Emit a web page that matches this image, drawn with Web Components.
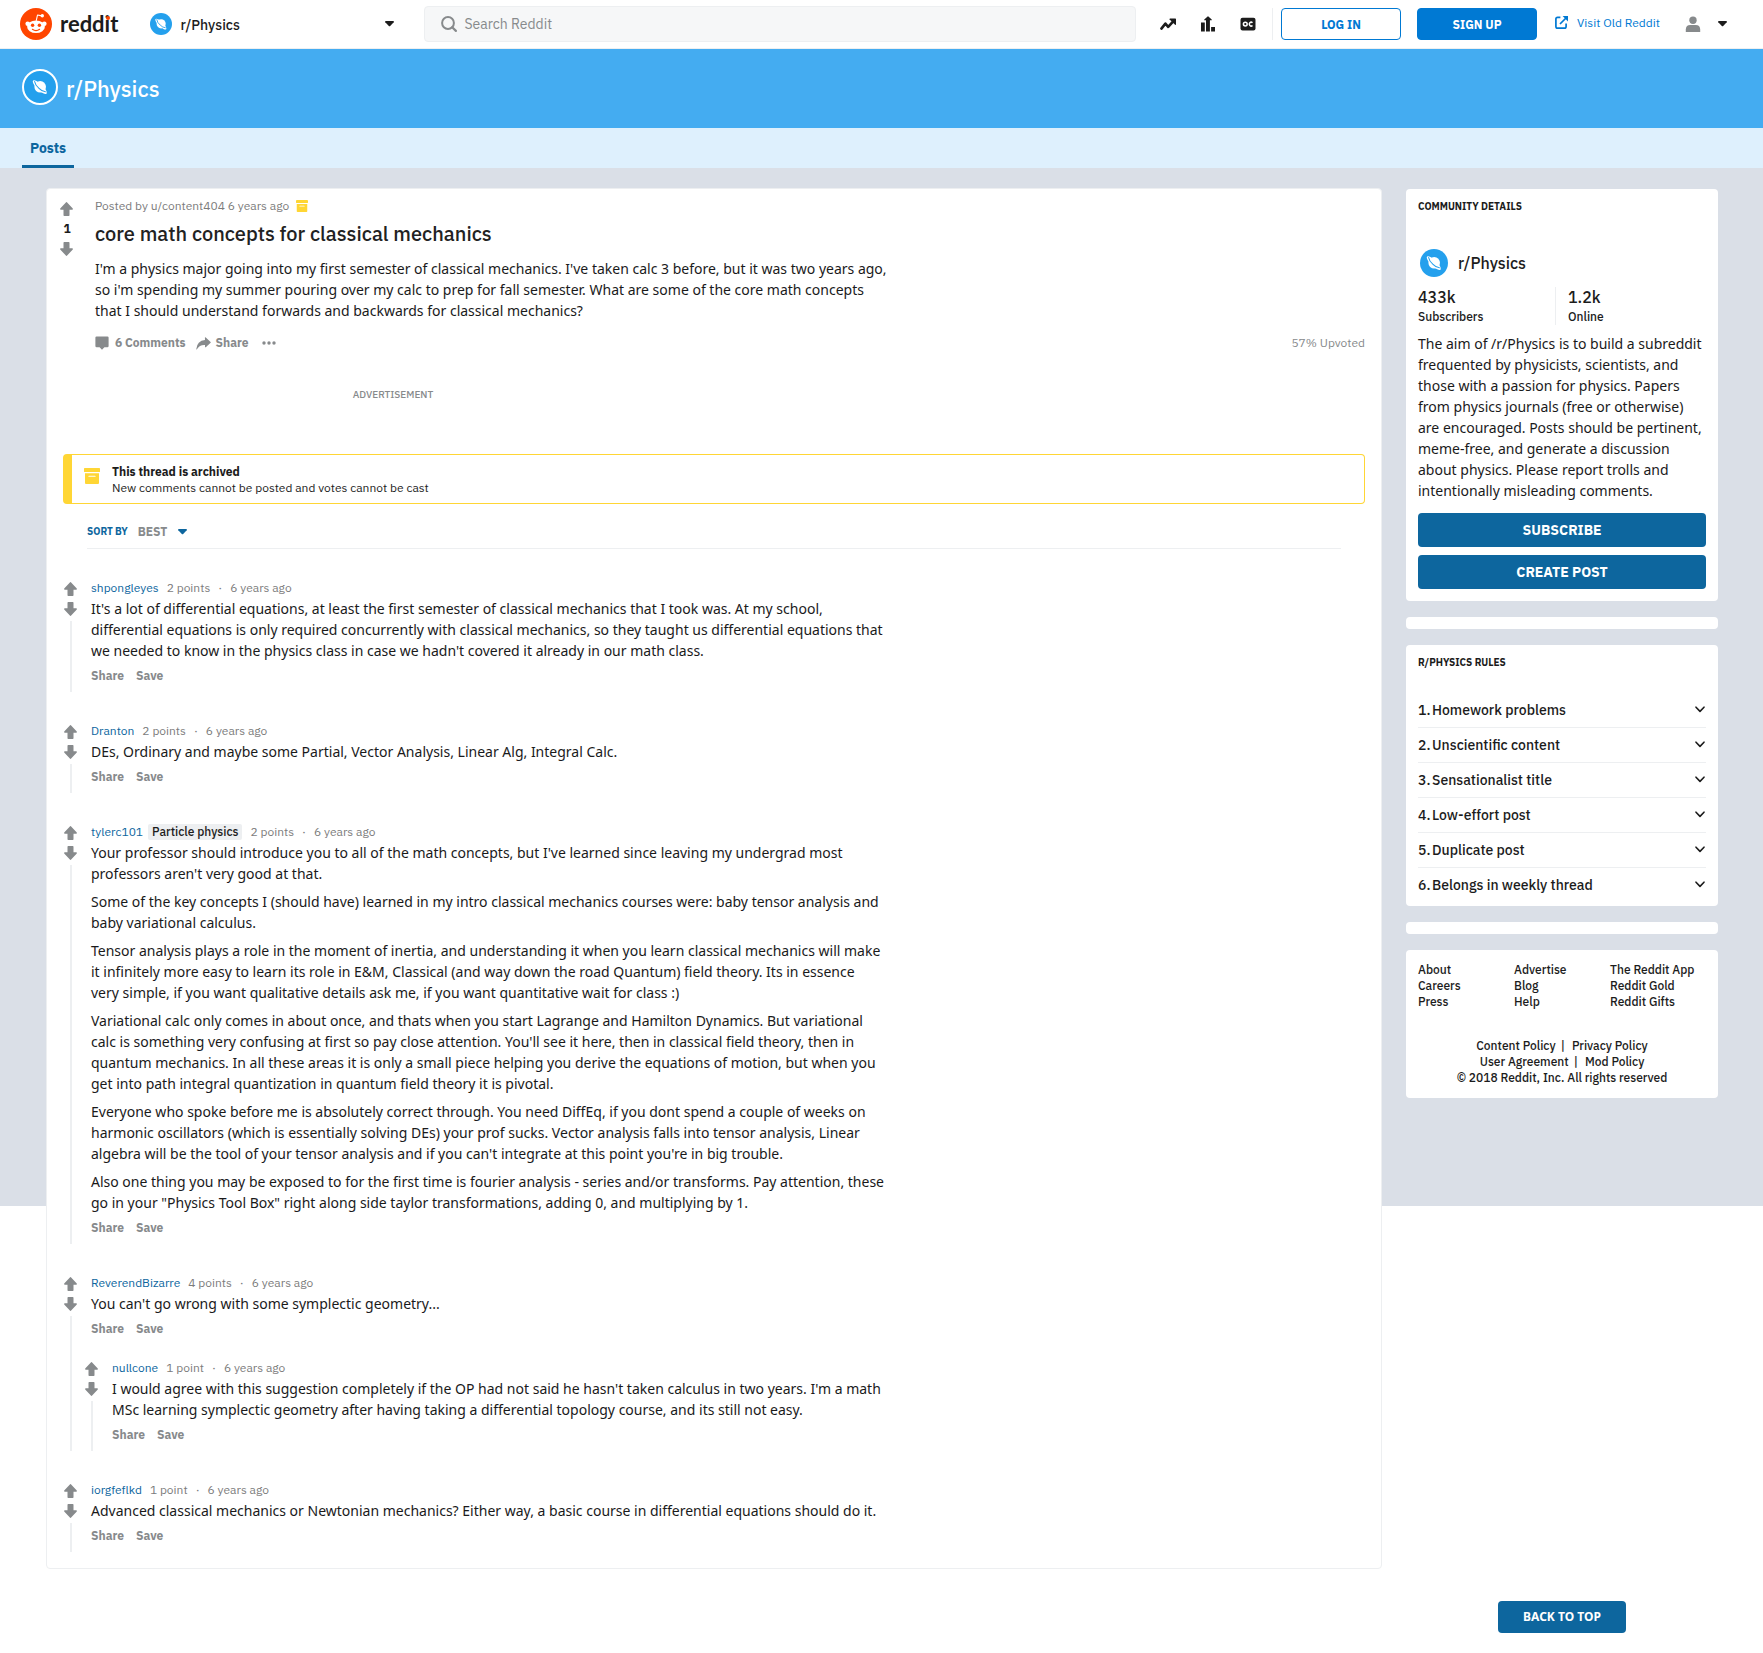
<!DOCTYPE html>
<html lang="en">
<head>
<meta charset="utf-8">
<meta name="viewport" content="width=device-width, initial-scale=1">
<title>core math concepts for classical mechanics : Physics</title>
<style>
  :root {
    --brand: #0079d3;
    --accent: #0d669e;
    --accent-soft: #def0fd;
    --banner: #44acf1;
    --planet: #24a0ed;
    --canvas: #dadfe7;
    --ink: #1c1c1c;
    --muted: #878a8c;
    --meta: #7c7c7c;
    --line: #edeff1;
    --archive: #ffd635;
    --body-font: "Noto Sans", "Open Sans", sans-serif;
  }
  body {
    margin: 0;
    background: #fff;
    color: var(--ink);
    font: 400 12px/16px "IBM Plex Sans", Roboto, "Open Sans", sans-serif;
  }
</style>
</head>
<body>
<reddit-page>
  <reddit-header slot="top"></reddit-header>
  <community-banner slot="top" name="r/Physics"></community-banner>

  <article-card>
    <forum-post author="u/content404" age="6 years ago" score="1" heading="core math concepts for classical mechanics" comments="6" upvoted="57%">
      <p>I'm a physics major going into my first semester of classical mechanics. I've taken calc 3 before, but it was two years ago, so i'm spending my summer pouring over my calc to prep for fall semester. What are some of the core math concepts that I should understand forwards and backwards for classical mechanics?</p>
    </forum-post>
    <ad-slot>ADVERTISEMENT</ad-slot>
    <archive-notice heading="This thread is archived">New comments cannot be posted and votes cannot be cast</archive-notice>
    <sort-bar></sort-bar>

    <thread-comment author="shpongleyes" points="2 points" age="6 years ago">
      <p>It's a lot of differential equations, at least the first semester of classical mechanics that I took was. At my school, differential equations is only required concurrently with classical mechanics, so they taught us differential equations that we needed to know in the physics class in case we hadn't covered it already in our math class.</p>
    </thread-comment>
    <thread-comment author="Dranton" points="2 points" age="6 years ago">
      <p>DEs, Ordinary and maybe some Partial, Vector Analysis, Linear Alg, Integral Calc.</p>
    </thread-comment>
    <thread-comment author="tylerc101" flair="Particle physics" points="2 points" age="6 years ago">
      <p>Your professor should introduce you to all of the math concepts, but I've learned since leaving my undergrad most professors aren't very good at that.</p>
      <p>Some of the key concepts I (should have) learned in my intro classical mechanics courses were: baby tensor analysis and baby variational calculus.</p>
      <p>Tensor analysis plays a role in the moment of inertia, and understanding it when you learn classical mechanics will make it infinitely more easy to learn its role in E&amp;M, Classical (and way down the road Quantum) field theory. Its in essence very simple, if you want qualitative details ask me, if you want quantitative wait for class :)</p>
      <p>Variational calc only comes in about once, and thats when you start Lagrange and Hamilton Dynamics. But variational calc is something very confusing at first so pay close attention. You'll see it here, then in classical field theory, then in quantum mechanics. In all these areas it is only a small piece helping you derive the equations of motion, but when you get into path integral quantization in quantum field theory it is pivotal.</p>
      <p>Everyone who spoke before me is absolutely correct through. You need DiffEq, if you dont spend a couple of weeks on harmonic oscillators (which is essentially solving DEs) your prof sucks. Vector analysis falls into tensor analysis, Linear algebra will be the tool of your tensor analysis and if you can't integrate at this point you're in big trouble.</p>
      <p>Also one thing you may be exposed to for the first time is fourier analysis - series and/or transforms. Pay attention, these go in your "Physics Tool Box" right along side taylor transformations, adding 0, and multiplying by 1.</p>
    </thread-comment>
    <thread-comment author="ReverendBizarre" points="4 points" age="6 years ago">
      <p>You can't go wrong with some symplectic geometry...</p>
      <thread-comment slot="replies" author="nullcone" points="1 point" age="6 years ago">
        <p>I would agree with this suggestion completely if the OP had not said he hasn't taken calculus in two years. I'm a math MSc learning symplectic geometry after having taking a differential topology course, and its still not easy.</p>
      </thread-comment>
    </thread-comment>
    <thread-comment author="iorgfeflkd" points="1 point" age="6 years ago">
      <p>Advanced classical mechanics or Newtonian mechanics? Either way, a basic course in differential equations should do it.</p>
    </thread-comment>
  </article-card>

  <side-card slot="side" heading="COMMUNITY DETAILS">
    <community-details name="r/Physics" subscribers="433k" online="1.2k">The aim of /r/Physics is to build a subreddit frequented by physicists, scientists, and those with a passion for physics. Papers from physics journals (free or otherwise) are encouraged. Posts should be pertinent, meme-free, and generate a discussion about physics. Please report trolls and intentionally misleading comments.</community-details>
  </side-card>
  <side-card slot="side" empty></side-card>
  <side-card slot="side" heading="R/PHYSICS RULES" tight>
    <rule-item number="1.">Homework problems</rule-item>
    <rule-item number="2.">Unscientific content</rule-item>
    <rule-item number="3.">Sensationalist title</rule-item>
    <rule-item number="4.">Low-effort post</rule-item>
    <rule-item number="5.">Duplicate post</rule-item>
    <rule-item number="6.">Belongs in weekly thread</rule-item>
  </side-card>
  <side-card slot="side" empty></side-card>
  <side-card slot="side"><site-links></site-links></side-card>
</reddit-page>

<script>
const RESET = `
  *, *::before, *::after { box-sizing: border-box; }
  button, input, select { font: inherit; color: inherit; margin: 0; padding: 0; border: 0; background: none; border-radius: 0; }
  button, select { cursor: pointer; }
  a { color: inherit; text-decoration: none; }
  h1, h2, p { margin: 0; }
`;

function define(tag, render) {
  customElements.define(tag, class extends HTMLElement {
    constructor() {
      super();
      this.attachShadow({ mode: "open" });
    }
    connectedCallback() {
      const template = document.createElement("template");
      template.innerHTML = render(name => this.getAttribute(name) || "", this);
      this.shadowRoot.replaceChildren(template.content.cloneNode(true));
    }
  });
}

/* Each icon: width, height, viewBox, markup */
const ICONS = {
  up: [13, 14, "0 0 13 14", `<path fill="currentColor" d="M6.1.2Q6.5-.1 6.9.2L12.8 6.6Q13.3 7.8 12 7.8H9.5V13.3Q9.5 14 8.8 14H4.2Q3.5 14 3.5 13.3V7.8H1Q-.3 7.8.2 6.6Z"/>`],
  down: [13, 14, "0 0 13 14", `<path fill="currentColor" d="M6.1 13.8Q6.5 14.1 6.9 13.8L12.8 7.4Q13.3 6.2 12 6.2H9.5V.7Q9.5 0 8.8 0H4.2Q3.5 0 3.5.7V6.2H1Q-.3 6.2.2 7.4Z"/>`],
  caret: [9, 6, "0 0 9 6", `<path fill="currentColor" d="M.7 0H8.3Q9.4.2 8.7 1.2L5.2 5Q4.5 5.6 3.8 5L.3 1.2Q-.4.2.7 0Z"/>`],
  chevron: [10, 7, "0 0 10 7", `<path fill="none" stroke="currentColor" stroke-width="1.6" stroke-linecap="round" stroke-linejoin="round" d="M1 1.2L5 5.4L9 1.2"/>`],
  search: [16, 16, "0 0 16 16", `<circle cx="7" cy="7" r="5.9" fill="none" stroke="currentColor" stroke-width="2"/><path d="M11.2 11.2L14.9 14.9" stroke="currentColor" stroke-width="2.2" stroke-linecap="round"/>`],
  trending: [16, 12, "0 0 16 12", `<path fill="none" stroke="currentColor" stroke-width="2.6" stroke-linejoin="round" stroke-linecap="round" d="M1.4 10.6L5.4 5.6L8.2 8.8L13 3.6"/><path fill="currentColor" d="M10 .4H15.3Q16 .4 16 1.1V6.6Q15.7 7.2 15.1 6.7L9.6 1.5Q9.2.7 10 .4Z"/>`],
  bars: [16, 16, "0 0 16 16", `<path fill="currentColor" d="M1 6.5H4.8V15.5H1ZM6 15.5V4.2H4.3Q4 3.8 4.3 3.4L7.6.4Q8 .1 8.4.4L11.7 3.4Q12 3.8 11.7 4.2H9.9V15.5ZM11.1 11H15V15.5H11.1Z"/>`],
  oc: [16, 14, "0 0 16 14", `<rect x=".5" y=".8" width="15" height="12.6" rx="2" fill="currentColor"/><circle cx="5.3" cy="7.1" r="1.9" fill="none" stroke="#fff" stroke-width="1.5"/><path d="M12.5 5.7A1.9 1.9 0 1 0 12.5 8.5" fill="none" stroke="#fff" stroke-width="1.5"/>`],
  external: [13, 13, "0 0 13 13", `<path fill="none" stroke="currentColor" stroke-width="1.7" d="M5.4 1.4H2.6Q.9 1.4.9 3.1V10.4Q.9 12.1 2.6 12.1H9.4Q11.1 12.1 11.1 10.4V7.6M5 8L11 2"/><path fill="currentColor" d="M7.6 0H13V5.4Z"/>`],
  user: [16, 16, "0 0 16 16", `<circle cx="8" cy="4.3" r="3.7" fill="currentColor"/><path fill="currentColor" d="M.8 16V13.4Q1 9 5.2 9H10.8Q15 9 15.2 13.4V16Z"/>`],
  comment: [14, 14, "0 0 14 14", `<path fill="currentColor" d="M1.6.4H12.4Q13.6.4 13.6 1.6V10Q13.6 11.2 12.4 11.2H9.4L7 13.8L4.6 11.2H1.6Q.4 11.2.4 10V1.6Q.4.4 1.6.4Z"/>`],
  share: [15, 13, "0 0 15 13", `<path fill="currentColor" d="M8.9.5Q9.4.1 9.8.5L14.6 5Q15 5.4 14.6 5.8L9.8 10.2Q9.3 10.5 9 10.1V8Q3.600 7.600.9 12.3Q.3 12.900.3 12Q1 3.700 9 2.900Z"/>`],
  dots: [14, 4, "0 0 14 4", `<g fill="currentColor"><circle cx="2" cy="2" r="1.7"/><circle cx="7" cy="2" r="1.7"/><circle cx="12" cy="2" r="1.7"/></g>`],
  box: [12, 12, "0 0 16 16", `<path fill="currentColor" d="M.6 0H15.400Q16 0 16 .6V3.400Q16 4 15.400 4H.6Q0 4 0 3.400V.6Q0 0 .6 0Z"/><path fill="currentColor" fill-rule="evenodd" d="M1 5.300H15V15Q15 16 14 16H2Q1 16 1 15ZM5 7.700Q4.400 7.700 4.400 8.300V8.700H11.600V8.300Q11.600 7.700 11 7.700Z"/>`],
  planet: [28, 28, "0 0 28 28", `<circle cx="14" cy="14" r="14" fill="#24a0ed"/><circle cx="14.200" cy="13.800" r="5.800" fill="#fff"/><ellipse cx="13.800" cy="14.100" rx="9.400" ry="3" transform="rotate(44 13.800 14.100)" fill="#fff"/><path d="M8.600 8.500Q9.300 12.500 13 15.400Q16.200 18.600 19.400 18.800" fill="none" stroke="#24a0ed" stroke-width="1.100" stroke-linecap="round"/>`],
  snoo: [32, 32, "0 0 32 32", `<circle cx="16" cy="16" r="16" fill="#ff4500"/><g fill="#fff"><circle cx="7.700" cy="15.700" r="2.300"/><circle cx="24.300" cy="15.700" r="2.300"/><ellipse cx="16" cy="18.700" rx="8.900" ry="6.300"/><circle cx="22.300" cy="7.800" r="1.700"/></g><path d="M16.200 12.800L17.500 7L22 7.900" fill="none" stroke="#fff" stroke-width="1.100" stroke-linejoin="round"/><circle cx="12.600" cy="17.200" r="1.700" fill="#ff4500"/><circle cx="19.400" cy="17.200" r="1.700" fill="#ff4500"/><path d="M12.400 21.300Q16 23.900 19.600 21.300" fill="none" stroke="#ff4500" stroke-width="1.100" stroke-linecap="round"/>`]
};

define("ui-icon", (attr) => {
  const [w, h, box, body] = ICONS[attr("name")];
  const size = Number(attr("size"));
  const width = size || w;
  const height = size ? Math.round(size * h / w) : h;
  return `<style>:host { display: inline-flex; flex: none; } svg { display: block; overflow: visible; }</style>
    <svg width="${width}" height="${height}" viewBox="${box}" aria-hidden="true">${body}</svg>`;
});

define("reddit-page", () => `
  <style>${RESET}
    :host { display: block; }
    main {
      display: flex; align-items: stretch; gap: 24px;
      padding: 20px 45px 20px 46px;
      background: linear-gradient(var(--canvas), var(--canvas)) no-repeat 0 0 / 100% 1038px;
    }
    .content { flex: 1; min-width: 0; padding-bottom: 64px; }
    aside { flex: 0 0 312px; display: flex; flex-direction: column; gap: 16px; padding-top: 1px; }
    .top { margin: auto auto 0; width: 128px; height: 32px; border-radius: 4px; background: var(--accent); color: #fff; font: 700 12px/16px var(--body-font); }
  </style>
  <slot name="top"></slot>
  <main>
    <div class="content"><slot></slot></div>
    <aside><slot name="side"></slot><button class="top" type="button">BACK TO TOP</button></aside>
  </main>`);

define("reddit-header", () => `
  <style>${RESET}
    :host { display: block; }
    header { display: flex; align-items: center; height: 49px; padding: 0 36px 1px 20px; border-bottom: 1px solid var(--line); background: #fff; }
    .logo { display: flex; align-items: center; gap: 8px; }
    .word { position: relative; font: 700 22px/32px Lato, sans-serif; }
    .word::after { content: ""; position: absolute; top: 8px; right: 8px; width: 4px; height: 4px; border-radius: 50%; background: #ff4500; }
    .community { flex: 0 1 244px; display: flex; align-items: center; gap: 8px; margin: 0 30px 0 32px; }
    .community select { flex: 1; appearance: none; height: 24px; padding-top: 2px; font-size: 14px; font-weight: 500; outline: 0; }
    .community label, .search { display: flex; align-items: center; }
    .search { flex: 1; gap: 7px; height: 36px; padding: 0 16px; border: 1px solid var(--line); border-radius: 4px; background: #f6f7f8; color: var(--muted); }
    .search input { flex: 1; min-width: 0; height: 32px; font-size: 14px; outline: 0; appearance: none; }
    .search input::placeholder { color: var(--muted); opacity: 1; }
    nav { display: flex; align-items: center; gap: 24px; height: 32px; padding: 0 16px 0 24px; border-right: 1px solid var(--line); }
    nav a { display: flex; width: 16px; justify-content: center; }
    .auth { display: flex; gap: 16px; margin: 0 18px 0 8px; }
    .auth button { width: 120px; height: 32px; padding-top: 2px; border: 1px solid var(--brand); border-radius: 4px; font-weight: 700; color: var(--brand); }
    .auth .solid { background: var(--brand); color: #fff; }
    .old { display: flex; align-items: center; gap: 9px; padding-bottom: 2px; color: var(--brand); }
    .user { display: flex; align-items: center; gap: 17px; margin-left: 25px; }
    .user ui-icon:first-child { color: var(--muted); }
  </style>
  <header>
    <a class="logo" href="#" aria-label="reddit home"><ui-icon name="snoo"></ui-icon><span class="word">reddit</span></a>
    <div class="community">
      <label for="place" aria-label="Community"><ui-icon name="planet" size="22"></ui-icon></label>
      <select id="place"><option>r/Physics</option></select>
      <ui-icon name="caret"></ui-icon>
    </div>
    <label class="search"><ui-icon name="search"></ui-icon><input type="search" placeholder="Search Reddit" aria-label="Search Reddit"></label>
    <nav aria-label="Feeds">
      <a href="#" aria-label="Popular"><ui-icon name="trending"></ui-icon></a>
      <a href="#" aria-label="All"><ui-icon name="bars"></ui-icon></a>
      <a href="#" aria-label="Original content"><ui-icon name="oc"></ui-icon></a>
    </nav>
    <div class="auth"><button type="button">LOG IN</button><button class="solid" type="button">SIGN UP</button></div>
    <a class="old" href="#"><ui-icon name="external"></ui-icon>Visit Old Reddit</a>
    <button class="user" type="button" aria-label="User menu"><ui-icon name="user"></ui-icon><ui-icon name="caret"></ui-icon></button>
  </header>`);

define("community-banner", (attr) => `
  <style>${RESET}
    :host { display: block; }
    .banner { display: flex; align-items: center; gap: 8px; height: 79px; padding: 0 22px 3px; background: var(--banner); color: #fff; }
    .badge { display: flex; width: 36px; height: 36px; align-items: center; justify-content: center; border: 2px solid #fff; border-radius: 50%; background: var(--planet); }
    h2 { padding-top: 4px; font-size: 22px; line-height: 26px; font-weight: 500; }
    nav { height: 40px; padding: 0 22px; background: var(--accent-soft); }
    nav a { display: inline-block; height: 40px; padding: 10px 8px 0; border-bottom: 3px solid var(--accent); font-size: 14px; line-height: 20px; font-weight: 700; color: var(--accent); }
  </style>
  <div class="banner"><span class="badge"><ui-icon name="planet" size="28"></ui-icon></span><h2>${attr("name")}</h2></div>
  <nav><a href="#">Posts</a></nav>`);

define("article-card", () => `
  <style>
    :host { display: block; padding-bottom: 16px; border: 1px solid var(--line); border-radius: 4px; background: #fff; }
    ::slotted(*) { margin-left: 16px; margin-right: 16px; }
    ::slotted(forum-post) { margin-left: 12px; }
    ::slotted(thread-comment) { margin-top: 31px; }
    ::slotted(sort-bar) { margin-left: 40px; margin-right: 40px; }
  </style>
  <slot></slot>`);

define("forum-post", (attr) => `
  <style>${RESET}
    :host { display: flex; gap: 20px; padding-top: 9px; }
    .votes { flex: 0 0 16px; display: flex; flex-direction: column; align-items: center; gap: 4px; padding-top: 3px; color: var(--muted); }
    .votes button { display: flex; width: 16px; height: 16px; padding-left: 1px; align-items: center; }
    .votes b { color: var(--ink); }
    .main { flex: 1; min-width: 0; }
    .meta { display: flex; align-items: center; gap: 7px; color: var(--meta); }
    .meta ui-icon { color: var(--archive); }
    h1 { margin: 8px 0 12px; font-size: 20px; line-height: 24px; font-weight: 500; color: #222; }
    .body { max-width: 796px; font: 400 14px/21px var(--body-font); color: #1a1a1b; }
    ::slotted(p) { margin: 0; }
    .actions { display: flex; align-items: center; margin-top: 14px; font-weight: 700; color: var(--muted); }
    .actions button { display: flex; align-items: center; gap: 6px; margin-right: 10px; }
    .actions button:nth-child(2) { gap: 5px; margin-right: 13px; }
    .actions span { margin-left: auto; font-weight: 400; }
  </style>
  <div class="votes">
    <button type="button" aria-label="Upvote"><ui-icon name="up"></ui-icon></button>
    <b>${attr("score")}</b>
    <button type="button" aria-label="Downvote"><ui-icon name="down"></ui-icon></button>
  </div>
  <div class="main">
    <div class="meta"><span>Posted by <a href="#">${attr("author")}</a> ${attr("age")}</span><ui-icon name="box"></ui-icon></div>
    <h1>${attr("heading")}</h1>
    <div class="body"><slot></slot></div>
    <div class="actions">
      <button type="button"><ui-icon name="comment"></ui-icon>${attr("comments")} Comments</button>
      <button type="button"><ui-icon name="share"></ui-icon>Share</button>
      <button type="button" aria-label="More options"><ui-icon name="dots"></ui-icon></button>
      <span>${attr("upvoted")} Upvoted</span>
    </div>
  </div>`);

define("ad-slot", () => `
  <style>
    :host { display: block; max-width: 660px; padding: 36px 0 51px; text-align: center; font-size: 10px; font-weight: 500; color: var(--muted); }
  </style>
  <slot></slot>`);

define("archive-notice", (attr) => `
  <style>${RESET}
    :host { display: flex; gap: 12px; padding: 9px 12px 7px; border: 1px solid var(--archive); border-left-width: 9px; border-radius: 4px; }
    ui-icon { padding-top: 4px; color: var(--archive); }
    b { display: block; }
  </style>
  <ui-icon name="box" size="16"></ui-icon>
  <div><b>${attr("heading")}</b><slot></slot></div>`);

define("sort-bar", () => `
  <style>${RESET}
    :host { display: flex; align-items: center; gap: 10px; margin-top: 18px; padding-bottom: 6px; border-bottom: 1px solid var(--line); font-weight: 700; color: var(--accent); }
    label { font-size: 10px; }
    select { appearance: none; height: 20px; color: var(--muted); outline: 0; }
  </style>
  <label for="sort">SORT BY</label>
  <select id="sort"><option>BEST</option></select>
  <ui-icon name="caret"></ui-icon>`);

define("thread-comment", (attr) => `
  <style>${RESET}
    :host { display: flex; gap: 12px; }
    .votes { flex: 0 0 16px; display: flex; flex-direction: column; align-items: center; gap: 4px; padding-top: 1px; color: var(--muted); }
    .votes button { display: flex; width: 16px; height: 16px; padding-left: 1px; align-items: center; }
    .votes i { flex: 1; width: 2px; background: var(--line); }
    .main { flex: 1; min-width: 0; max-width: 794px; padding-bottom: 8px; }
    .meta { display: flex; align-items: center; margin-bottom: 2px; color: var(--meta); white-space: pre; }
    .meta a { color: var(--accent); }
    .flair { margin-left: 5px; padding: 0 4px; border-radius: 2px; background: var(--line); font-weight: 500; color: var(--ink); }
    .info { margin-left: 8px; display: flex; gap: 8px; }
    .body { display: flex; flex-direction: column; gap: 7px; font: 400 14px/21px var(--body-font); color: #1a1a1b; }
    ::slotted(p) { margin: 0; }
    .actions { display: flex; gap: 12px; margin-top: 7px; }
    .actions button { font-weight: 700; color: var(--muted); }
    ::slotted(thread-comment) { margin: 23px 0 -8px -7px; }
  </style>
  <div class="votes">
    <button type="button" aria-label="Upvote"><ui-icon name="up"></ui-icon></button>
    <button type="button" aria-label="Downvote"><ui-icon name="down"></ui-icon></button>
    <i></i>
  </div>
  <div class="main">
    <div class="meta"><a href="#">${attr("author")}</a>${attr("flair") ? `<span class="flair">${attr("flair")}</span>` : ""}<span class="info"><span>${attr("points")}</span><span>·</span><span>${attr("age")}</span></span></div>
    <div class="body"><slot></slot></div>
    <div class="actions"><button type="button">Share</button><button type="button">Save</button></div>
    <slot name="replies"></slot>
  </div>`);

define("side-card", (attr, host) => `
  <style>${RESET}
    :host { display: block; padding: 12px; border-radius: 4px; background: #fff; }
    :host([empty]) { padding: 6px; }
    :host([tight]) { padding-bottom: 4px; }
    h2 { font-size: 10px; line-height: 12px; font-weight: 700; }
    :host([tight]) h2 { margin-bottom: 24px; }
    ::slotted(rule-item:last-child) { border-bottom: 0; }
  </style>
  ${host.hasAttribute("heading") ? `<h2>${attr("heading")}</h2>` : ""}<slot></slot>`);

define("community-details", (attr) => `
  <style>${RESET}
    :host { display: block; }
    .name { display: flex; align-items: center; gap: 10px; margin: 36px 0 10px 2px; font-size: 16px; line-height: 20px; font-weight: 500; }
    dl { display: grid; grid-template-columns: 138px 1fr; margin: 0; font-weight: 500; }
    dl div { display: flex; flex-direction: column-reverse; gap: 2px; }
    dl div:last-child { padding-left: 12px; }
    dl div:first-child { border-right: 1px solid var(--line); }
    dd { margin: 0; font-size: 16px; line-height: 20px; }
    p { margin: 8px 0 12px; font: 400 14px/21px var(--body-font); color: #1a1a1b; }
    button { display: block; width: 100%; height: 34px; border-radius: 4px; background: var(--accent); color: #fff; font-size: 14px; font-weight: 700; }
    button + button { margin-top: 8px; }
  </style>
  <a class="name" href="#"><ui-icon name="planet"></ui-icon>${attr("name")}</a>
  <dl>
    <div><dt>Subscribers</dt><dd>${attr("subscribers")}</dd></div>
    <div><dt>Online</dt><dd>${attr("online")}</dd></div>
  </dl>
  <p><slot></slot></p>
  <button type="button">SUBSCRIBE</button>
  <button type="button">CREATE POST</button>`);

define("rule-item", (attr) => `
  <style>${RESET}
    :host { display: block; border-bottom: 1px solid var(--line); }
    button { display: flex; align-items: center; width: 100%; height: 34px; font-size: 14px; font-weight: 500; text-align: left; }
    .num { width: 14px; }
    .text { flex: 1; }
    ui-icon { padding: 0 1px 2px 0; }
  </style>
  <button type="button" aria-expanded="false"><span class="num">${attr("number")}</span><span class="text"><slot></slot></span><ui-icon name="chevron"></ui-icon></button>`);

define("site-links", () => `
  <style>${RESET}
    :host { display: block; font-weight: 500; }
    .columns { display: grid; grid-template-columns: repeat(3, 1fr); margin-bottom: 28px; }
    .columns a { display: block; }
    .legal { text-align: center; }
    .legal i { margin: 0 7px 0 5px; font-style: normal; }
  </style>
  <nav class="columns">
    <div><a href="#">About</a><a href="#">Careers</a><a href="#">Press</a></div>
    <div><a href="#">Advertise</a><a href="#">Blog</a><a href="#">Help</a></div>
    <div><a href="#">The Reddit App</a><a href="#">Reddit Gold</a><a href="#">Reddit Gifts</a></div>
  </nav>
  <div class="legal">
    <div><a href="#">Content Policy</a><i>|</i><a href="#">Privacy Policy</a></div>
    <div><a href="#">User Agreement</a><i>|</i><a href="#">Mod Policy</a></div>
    <div>© 2018 Reddit, Inc. All rights reserved</div>
  </div>`);
</script>
</body>
</html>
